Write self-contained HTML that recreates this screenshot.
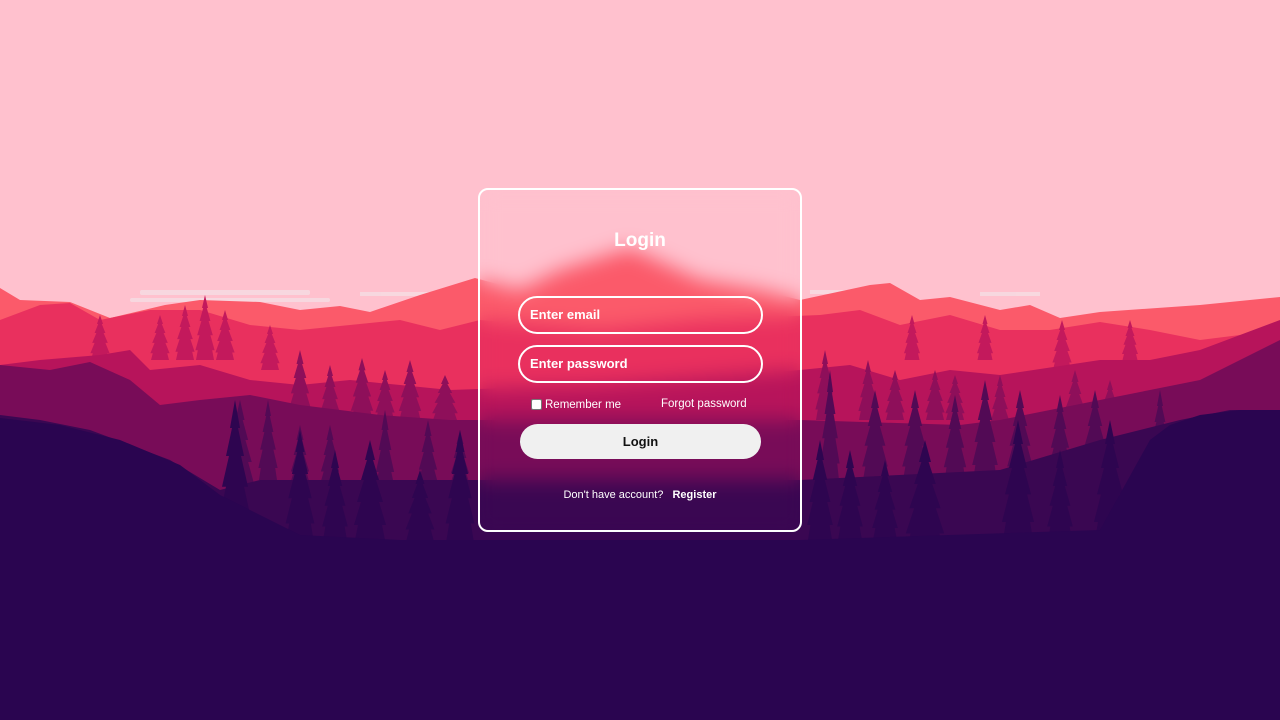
<!DOCTYPE html>
<html><head><meta charset="utf-8"><style>
html,body{margin:0;padding:0;width:1280px;height:720px;overflow:hidden;background:#2a0550;font-family:"Liberation Sans",sans-serif}
svg.bg{position:absolute;left:0;top:0}
.box{position:absolute;left:478px;top:188px;width:324px;height:344px;border:2px solid #fff;border-radius:10px;backdrop-filter:blur(10px);-webkit-backdrop-filter:blur(10px);box-sizing:border-box}
.t{position:absolute;left:0;width:100%;text-align:center;top:40px;color:#fff;font-weight:bold;font-size:19px}
.in{position:absolute;left:38px;width:245px;height:38px;border:2px solid #fff;border-radius:20px;box-sizing:border-box;color:#fff;font-weight:bold;font-size:13px;line-height:34px;padding-left:10px}
.rm{position:absolute;left:51px;top:209px;color:#fff;font-size:11.5px}
.cb{display:inline-block;width:11px;height:11px;background:#fff;border:1px solid #777;box-sizing:border-box;border-radius:2px;vertical-align:-2px;margin-right:3px}
.fp{position:absolute;left:181px;top:208px;color:#fff;font-size:11.5px}
.btn{position:absolute;left:40px;top:234px;width:241px;height:35px;background:#f0f0f0;border-radius:18px;text-align:center;line-height:35px;font-weight:bold;font-size:13px;color:#111}
.ft{position:absolute;left:0;width:100%;text-align:center;top:299px;color:#fff;font-size:11px}
.ft b{margin-left:6px}
</style></head><body>
<svg class="bg" width="1280" height="720" viewBox="0 0 1280 720">
<defs><polygon id="tr" points="0,-100 5,-80 3,-80 9,-60 6,-60 13,-38 9,-38 16,-15 12,-15 15,0 -15,0 -12,-15 -16,-15 -9,-38 -13,-38 -6,-60 -9,-60 -3,-80 -5,-80"/></defs>
<rect width="1280" height="720" fill="#ffc1ce"/>
<g fill="#f6dde4" opacity=".8"><rect x="140" y="290" width="170" height="5" rx="2"/><rect x="130" y="298" width="200" height="4" rx="2"/><rect x="360" y="292" width="100" height="4"/><rect x="810" y="290" width="90" height="4"/><rect x="980" y="292" width="60" height="4"/></g>
<polygon fill="#fb5a6a" points="0,288 20,300 70,302 110,318 165,305 200,300 260,302 300,310 340,306 370,312 420,295 475,278 520,290 560,270 630,248 700,280 760,290 800,300 870,285 890,283 920,300 950,297 1000,310 1030,305 1060,318 1100,312 1200,305 1280,297 1280,720 0,720"/>
<polygon fill="#e9305e" points="0,320 40,305 70,303 100,320 150,310 200,310 250,325 300,330 350,325 400,320 440,330 480,320 600,330 700,320 820,315 860,310 900,325 950,315 1000,330 1050,330 1100,322 1150,330 1200,340 1280,330 1280,720 0,720"/>
<g fill="#c3195c"><use href="#tr" transform="translate(100,360) scale(.6,.45)"/><use href="#tr" transform="translate(160,360) scale(.6,.45)"/><use href="#tr" transform="translate(185,360) scale(.6,.55)"/><use href="#tr" transform="translate(205,360) scale(.6,.65)"/><use href="#tr" transform="translate(225,360) scale(.6,.5)"/><use href="#tr" transform="translate(270,370) scale(.6,.45)"/><use href="#tr" transform="translate(912,360) scale(.5,.45)"/><use href="#tr" transform="translate(985,360) scale(.5,.45)"/><use href="#tr" transform="translate(1062,370) scale(.6,.5)"/><use href="#tr" transform="translate(1130,360) scale(.5,.4)"/></g>
<polygon fill="#b7145b" points="0,365 40,360 100,355 130,350 150,370 200,365 250,380 300,385 350,380 400,385 450,390 600,385 800,370 850,365 900,380 950,370 1000,375 1100,360 1150,360 1200,350 1240,335 1280,320 1280,720 0,720"/>
<g fill="#8e0f5a"><use href="#tr" transform="translate(300,420) scale(.7,.7)"/><use href="#tr" transform="translate(330,420) scale(.6,.55)"/><use href="#tr" transform="translate(362,420) scale(.7,.62)"/><use href="#tr" transform="translate(385,420) scale(.6,.5)"/><use href="#tr" transform="translate(410,420) scale(.7,.6)"/><use href="#tr" transform="translate(445,420) scale(.8,.45)"/><use href="#tr" transform="translate(825,420) scale(.6,.7)"/><use href="#tr" transform="translate(868,420) scale(.6,.6)"/><use href="#tr" transform="translate(895,420) scale(.6,.5)"/><use href="#tr" transform="translate(935,420) scale(.6,.5)"/><use href="#tr" transform="translate(955,420) scale(.6,.45)"/><use href="#tr" transform="translate(1000,430) scale(.6,.55)"/><use href="#tr" transform="translate(1075,430) scale(.7,.6)"/><use href="#tr" transform="translate(1110,430) scale(.6,.5)"/></g>
<polygon fill="#780c58" points="0,365 50,370 90,362 130,380 160,405 200,400 250,395 300,405 380,415 450,420 600,420 800,420 960,425 1000,420 1050,410 1100,400 1150,390 1200,380 1280,340 1280,720 0,720"/>
<g fill="#520a55"><use href="#tr" transform="translate(240,500) scale(.9,1)"/><use href="#tr" transform="translate(268,480) scale(.6,.8)"/><use href="#tr" transform="translate(300,500) scale(.7,.75)"/><use href="#tr" transform="translate(330,500) scale(.7,.75)"/><use href="#tr" transform="translate(385,510) scale(.7,1)"/><use href="#tr" transform="translate(428,500) scale(.7,.8)"/><use href="#tr" transform="translate(460,500) scale(.7,.7)"/><use href="#tr" transform="translate(830,480) scale(.6,1.1)"/><use href="#tr" transform="translate(875,480) scale(.8,.9)"/><use href="#tr" transform="translate(915,480) scale(.8,.9)"/><use href="#tr" transform="translate(955,480) scale(.7,.85)"/><use href="#tr" transform="translate(985,480) scale(.8,1)"/><use href="#tr" transform="translate(1020,480) scale(.8,.9)"/><use href="#tr" transform="translate(1060,480) scale(.7,.85)"/><use href="#tr" transform="translate(1095,480) scale(.8,.9)"/><use href="#tr" transform="translate(1160,470) scale(.6,.8)"/></g>
<polygon fill="#3a0752" points="0,415 40,420 90,430 130,445 170,460 220,490 260,480 400,480 800,480 1000,470 1100,440 1180,420 1230,410 1280,410 1280,720 0,720"/>
<g fill="#2e0550"><use href="#tr" transform="translate(235,540) scale(1,1.4)"/><use href="#tr" transform="translate(300,540) scale(.9,1.1)"/><use href="#tr" transform="translate(335,540) scale(.8,.9)"/><use href="#tr" transform="translate(370,540) scale(1,1)"/><use href="#tr" transform="translate(420,540) scale(.9,.7)"/><use href="#tr" transform="translate(460,540) scale(.9,1.1)"/><use href="#tr" transform="translate(820,540) scale(.8,1)"/><use href="#tr" transform="translate(850,540) scale(.8,.9)"/><use href="#tr" transform="translate(885,540) scale(.8,.8)"/><use href="#tr" transform="translate(925,550) scale(1.2,1.1)"/><use href="#tr" transform="translate(1018,540) scale(1,1.2)"/><use href="#tr" transform="translate(1060,540) scale(.8,.9)"/><use href="#tr" transform="translate(1110,540) scale(1,1.2)"/></g>
<polygon fill="#2a0550" points="0,418 60,425 120,440 180,465 220,495 260,515 300,535 400,540 800,540 1100,530 1150,440 1170,425 1200,415 1240,410 1280,410 1280,720 0,720"/>
</svg>
<div class="box">
<div class="t">Login</div>
<div class="in" style="top:106px">Enter email</div>
<div class="in" style="top:155px">Enter password</div>
<div class="rm"><span class="cb"></span>Remember me</div>
<div class="fp">Forgot password</div>
<div class="btn">Login</div>
<div class="ft">Don't have account? <b>Register</b></div>
</div>
</body></html>
